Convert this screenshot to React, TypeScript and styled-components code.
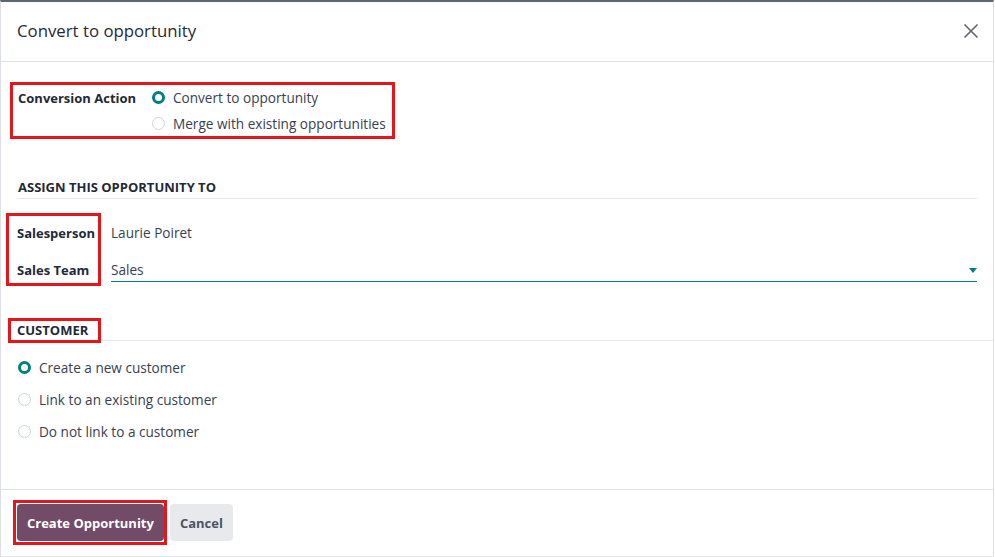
import React from "react";
import styled, { createGlobalStyle } from "styled-components";

const Global = createGlobalStyle`
  html, body { margin: 0; padding: 0; background: #fff; }
  body { font-family: "Open Sans", "Noto Sans", sans-serif; color: #374151; }
  * { box-sizing: border-box; }
`;

const Dialog = styled.div`
  width: 994px;
  height: 557px;
  border-top: 2px solid #5f6670;
  border-left: 1px solid #dcdfe4;
  border-right: 1px solid #dcdfe4;
  border-bottom: 1px solid #e6e8eb;
  display: flex;
  flex-direction: column;
  background: #fff;
`;

const Header = styled.header`
  height: 60px;
  flex: none;
  display: flex;
  align-items: center;
  justify-content: space-between;
  padding: 0 13px 2px 16px;
  border-bottom: 1px solid #dee2e6;
`;

const Title = styled.h4`
  margin: 0;
  font-size: 16.8px;
  font-weight: 400;
  color: #1f2937;
`;

const CloseBtn = styled.button`
  border: 0;
  background: none;
  padding: 0;
  width: 18px;
  height: 18px;
  display: flex;
  align-items: center;
  justify-content: center;
  cursor: pointer;
`;

const Body = styled.main`
  flex: 1;
  padding: 20px 16px 0 16px;
  display: flex;
  flex-direction: column;
`;

const Marked = styled.div<{ $ml?: number; $pl?: number }>`
  border: 3px solid #e3161b;
  margin-left: ${(p) => p.$ml ?? 0}px;
  padding-left: ${(p) => p.$pl ?? 0}px;
`;

const ActionBox = styled(Marked)`
  align-self: flex-start;
  display: flex;
  padding-right: 6px;
`;

const FieldLabel = styled.div`
  font-weight: 700;
  font-size: 13px;
  color: #1f2937;
  line-height: 26px;
  width: 134px;
  padding-right: 8px;
  white-space: nowrap;
`;

const RadioList = styled.div`
  display: flex;
  flex-direction: column;
  margin-top: -1px;
`;

const RadioRow = styled.label<{ $h?: number }>`
  display: flex;
  align-items: center;
  gap: 8px;
  height: ${(p) => p.$h ?? 26}px;
  font-size: 13.6px;
  color: #374151;
  white-space: nowrap;
`;

const RadioDot = styled.span<{ $on?: boolean }>`
  width: 13px;
  height: 13px;
  border-radius: 50%;
  flex: none;
  border: ${(p) => (p.$on ? "3.5px solid #017e84" : "1px solid #cfd4da")};
  background: #fff;
`;

const SectionHead = styled.div`
  margin-top: 38px;
  font-size: 13px;
  font-weight: 700;
  color: #1f2937;
  text-transform: uppercase;
  line-height: 20px;
  padding-bottom: 1px;
  padding-left: 1px;
  border-bottom: 1px solid #e5e7eb;
`;

const AssignRows = styled.div`
  display: flex;
  align-items: flex-start;
  margin-top: 14px;
`;

const LabelCol = styled(Marked)`
  display: flex;
  flex-direction: column;
  gap: 17px;
  padding: 7px 3px 3px 8px;
`;

const SmallLabel = styled.div`
  font-weight: 700;
  font-size: 13px;
  color: #1f2937;
  line-height: 20px;
  white-space: nowrap;
`;

const ValueCol = styled.div`
  flex: 1;
  display: flex;
  flex-direction: column;
  gap: 17px;
  padding-top: 10px;
  margin-left: 10px;
`;

const Value = styled.div`
  font-size: 13.6px;
  line-height: 20px;
  color: #374151;
`;

const SelectField = styled.div`
  display: flex;
  align-items: center;
  justify-content: space-between;
  font-size: 13.6px;
  line-height: 20px;
  color: #374151;
  border-bottom: 1px solid #017e84;
  padding-bottom: 1px;
`;

const CustomerHead = styled.div`
  margin: 32px -16px 0 -9px;
  border-bottom: 1px solid #e5e7eb;
  display: flex;
`;

const CustomerBox = styled(Marked)`
  font-size: 13px;
  font-weight: 700;
  color: #1f2937;
  text-transform: uppercase;
  line-height: 19px;
  padding: 0 10px 0 6px;
  margin-bottom: -3px;
`;

const CustomerRadios = styled.div`
  display: flex;
  flex-direction: column;
  margin-top: 11px;
  padding-left: 1px;
`;

const Footer = styled.footer`
  flex: none;
  height: 67px;
  border-top: 1px solid #dee2e6;
  display: flex;
  align-items: center;
  gap: 3px;
  padding-left: 12px;
  padding-bottom: 1px;
`;

const BtnBox = styled(Marked)`
  padding: 1px 0 1px 1px;
`;

const Btn = styled.button<{ $primary?: boolean }>`
  height: 37px;
  border: 0;
  border-radius: 4px;
  padding: 0 10px;
  font-family: inherit;
  font-size: 13px;
  font-weight: 700;
  color: ${(p) => (p.$primary ? "#fff" : "#4b5563")};
  background: ${(p) => (p.$primary ? "#714b67" : "#e7e9ed")};
  cursor: pointer;
`;

const Caret = () => (
  <svg width="8" height="5" viewBox="0 0 8 5">
    <path d="M0 0h8L4 5z" fill="#017e84" />
  </svg>
);

const CloseIcon = () => (
  <svg width="16" height="16" viewBox="0 0 16 16">
    <path d="M1.5 1.5l13 13M14.5 1.5l-13 13" stroke="#5f6670" strokeWidth="1.6" />
  </svg>
);

export default function App() {
  return (
    <>
      <Global />
      <Dialog>
        <Header>
          <Title>Convert to opportunity</Title>
          <CloseBtn aria-label="Close">
            <CloseIcon />
          </CloseBtn>
        </Header>
        <Body>
          <ActionBox $ml={-7} $pl={5}>
            <FieldLabel>Conversion Action</FieldLabel>
            <RadioList>
              <RadioRow>
                <RadioDot $on />
                Convert to opportunity
              </RadioRow>
              <RadioRow>
                <RadioDot />
                Merge with existing opportunities
              </RadioRow>
            </RadioList>
          </ActionBox>

          <SectionHead>Assign this opportunity to</SectionHead>
          <AssignRows>
            <LabelCol $ml={-11}>
              <SmallLabel>Salesperson</SmallLabel>
              <SmallLabel>Sales Team</SmallLabel>
            </LabelCol>
            <ValueCol>
              <Value>Laurie Poiret</Value>
              <SelectField>
                Sales
                <Caret />
              </SelectField>
            </ValueCol>
          </AssignRows>

          <CustomerHead>
            <CustomerBox>Customer</CustomerBox>
          </CustomerHead>
          <CustomerRadios>
            <RadioRow $h={31}>
              <RadioDot $on />
              Create a new customer
            </RadioRow>
            <RadioRow $h={32}>
              <RadioDot />
              Link to an existing customer
            </RadioRow>
            <RadioRow $h={32}>
              <RadioDot />
              Do not link to a customer
            </RadioRow>
          </CustomerRadios>
        </Body>
        <Footer>
          <BtnBox>
            <Btn $primary>Create Opportunity</Btn>
          </BtnBox>
          <Btn>Cancel</Btn>
        </Footer>
      </Dialog>
    </>
  );
}
